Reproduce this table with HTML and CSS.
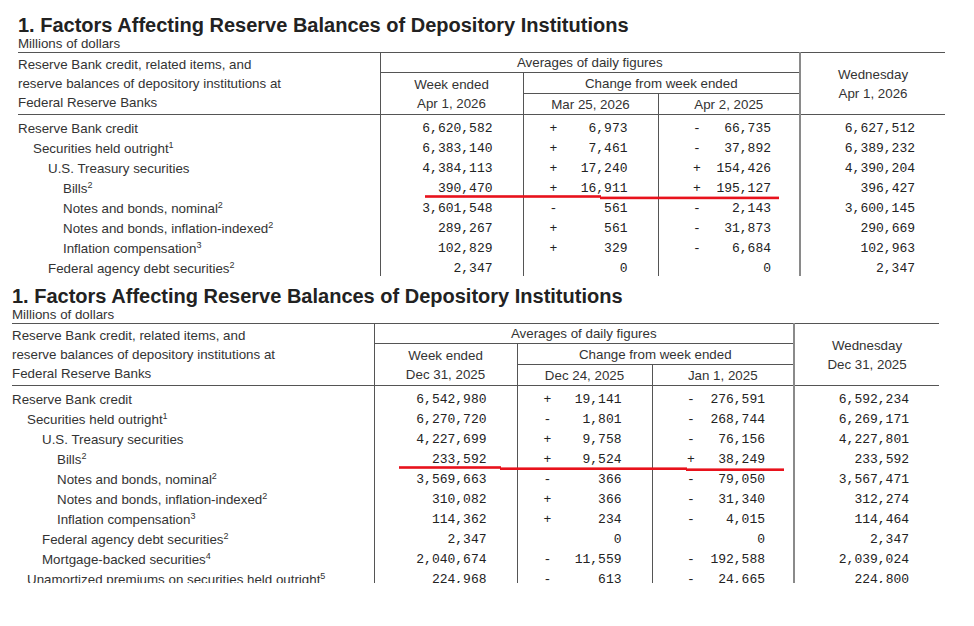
FILE: index.html
```html
<!DOCTYPE html>
<html lang="en">
<head>
<meta charset="utf-8">
<title>Factors Affecting Reserve Balances</title>
<link rel="stylesheet" href="styles.css">
</head>
<body>
<section class="panel panel-one">
  <h1 class="title">1. Factors Affecting Reserve Balances of Depository Institutions</h1>
  <div class="units">Millions of dollars</div>
  <table class="h41">
    <colgroup><col class="c-label"><col class="c-week"><col class="c-chg1"><col class="c-chg2"><col class="c-wed"></colgroup>
    <thead>
      <tr class="hr1">
        <th rowspan="3" class="h-label">Reserve Bank credit, related items, and<br>reserve balances of depository institutions at<br>Federal Reserve Banks</th>
        <th colspan="3" class="h-avg">Averages of daily figures</th>
        <th rowspan="3" class="h-wed">Wednesday<br>Apr 1, 2026</th>
      </tr>
      <tr class="hr2">
        <th rowspan="2" class="h-week">Week ended<br>Apr 1, 2026</th>
        <th colspan="2" class="h-chg">Change from week ended</th>
      </tr>
      <tr class="hr3">
        <th class="h-d1">Mar 25, 2026</th>
        <th class="h-d2">Apr 2, 2025</th>
      </tr>
    </thead>
    <tbody>
      <tr class="first"><td class="lab l0">Reserve Bank credit</td><td class="num n-week">6,620,582</td><td class="num n-c1">+    6,973</td><td class="num n-c2">-   66,735</td><td class="num n-wed">6,627,512</td></tr>
      <tr><td class="lab l1">Securities held outright<sup>1</sup></td><td class="num n-week">6,383,140</td><td class="num n-c1">+    7,461</td><td class="num n-c2">-   37,892</td><td class="num n-wed">6,389,232</td></tr>
      <tr><td class="lab l2">U.S. Treasury securities</td><td class="num n-week">4,384,113</td><td class="num n-c1">+   17,240</td><td class="num n-c2">+  154,426</td><td class="num n-wed">4,390,204</td></tr>
      <tr><td class="lab l3">Bills<sup>2</sup></td><td class="num n-week">390,470</td><td class="num n-c1">+   16,911</td><td class="num n-c2">+  195,127</td><td class="num n-wed">396,427</td></tr>
      <tr><td class="lab l3">Notes and bonds, nominal<sup>2</sup></td><td class="num n-week">3,601,548</td><td class="num n-c1">-      561</td><td class="num n-c2">-    2,143</td><td class="num n-wed">3,600,145</td></tr>
      <tr><td class="lab l3">Notes and bonds, inflation-indexed<sup>2</sup></td><td class="num n-week">289,267</td><td class="num n-c1">+      561</td><td class="num n-c2">-   31,873</td><td class="num n-wed">290,669</td></tr>
      <tr><td class="lab l3">Inflation compensation<sup>3</sup></td><td class="num n-week">102,829</td><td class="num n-c1">+      329</td><td class="num n-c2">-    6,684</td><td class="num n-wed">102,963</td></tr>
      <tr><td class="lab l2">Federal agency debt securities<sup>2</sup></td><td class="num n-week">2,347</td><td class="num n-c1">0</td><td class="num n-c2">0</td><td class="num n-wed">2,347</td></tr>
    </tbody>
  </table>
</section>

<section class="panel panel-two">
  <h1 class="title">1. Factors Affecting Reserve Balances of Depository Institutions</h1>
  <div class="units">Millions of dollars</div>
  <table class="h41">
    <colgroup><col class="c-label"><col class="c-week"><col class="c-chg1"><col class="c-chg2"><col class="c-wed"></colgroup>
    <thead>
      <tr class="hr1">
        <th rowspan="3" class="h-label">Reserve Bank credit, related items, and<br>reserve balances of depository institutions at<br>Federal Reserve Banks</th>
        <th colspan="3" class="h-avg">Averages of daily figures</th>
        <th rowspan="3" class="h-wed">Wednesday<br>Dec 31, 2025</th>
      </tr>
      <tr class="hr2">
        <th rowspan="2" class="h-week">Week ended<br>Dec 31, 2025</th>
        <th colspan="2" class="h-chg">Change from week ended</th>
      </tr>
      <tr class="hr3">
        <th class="h-d1">Dec 24, 2025</th>
        <th class="h-d2">Jan 1, 2025</th>
      </tr>
    </thead>
    <tbody>
      <tr class="first"><td class="lab l0">Reserve Bank credit</td><td class="num n-week">6,542,980</td><td class="num n-c1">+   19,141</td><td class="num n-c2">-  276,591</td><td class="num n-wed">6,592,234</td></tr>
      <tr><td class="lab l1">Securities held outright<sup>1</sup></td><td class="num n-week">6,270,720</td><td class="num n-c1">-    1,801</td><td class="num n-c2">-  268,744</td><td class="num n-wed">6,269,171</td></tr>
      <tr><td class="lab l2">U.S. Treasury securities</td><td class="num n-week">4,227,699</td><td class="num n-c1">+    9,758</td><td class="num n-c2">-   76,156</td><td class="num n-wed">4,227,801</td></tr>
      <tr><td class="lab l3">Bills<sup>2</sup></td><td class="num n-week">233,592</td><td class="num n-c1">+    9,524</td><td class="num n-c2">+   38,249</td><td class="num n-wed">233,592</td></tr>
      <tr><td class="lab l3">Notes and bonds, nominal<sup>2</sup></td><td class="num n-week">3,569,663</td><td class="num n-c1">-      366</td><td class="num n-c2">-   79,050</td><td class="num n-wed">3,567,471</td></tr>
      <tr><td class="lab l3">Notes and bonds, inflation-indexed<sup>2</sup></td><td class="num n-week">310,082</td><td class="num n-c1">+      366</td><td class="num n-c2">-   31,340</td><td class="num n-wed">312,274</td></tr>
      <tr><td class="lab l3">Inflation compensation<sup>3</sup></td><td class="num n-week">114,362</td><td class="num n-c1">+      234</td><td class="num n-c2">-    4,015</td><td class="num n-wed">114,464</td></tr>
      <tr><td class="lab l2">Federal agency debt securities<sup>2</sup></td><td class="num n-week">2,347</td><td class="num n-c1">0</td><td class="num n-c2">0</td><td class="num n-wed">2,347</td></tr>
      <tr><td class="lab l2">Mortgage-backed securities<sup>4</sup></td><td class="num n-week">2,040,674</td><td class="num n-c1">-   11,559</td><td class="num n-c2">-  192,588</td><td class="num n-wed">2,039,024</td></tr>
      <tr><td class="lab l1">Unamortized premiums on securities held outright<sup>5</sup></td><td class="num n-week">224,968</td><td class="num n-c1">-      613</td><td class="num n-c2">-   24,665</td><td class="num n-wed">224,800</td></tr>
    </tbody>
  </table>
</section>

<svg class="marks" width="974" height="626" viewBox="0 0 974 626" aria-hidden="true">
  <rect x="425" y="195.2" width="176" height="2.6" fill="#e8121c"/>
  <rect x="600" y="196.6" width="179" height="2.6" fill="#e8121c"/>
  <rect x="399" y="466.2" width="102" height="2.6" fill="#e8121c"/>
  <rect x="500" y="467.4" width="187" height="2.6" fill="#e8121c"/>
  <rect x="686" y="468.4" width="98" height="2.6" fill="#e8121c"/>
</svg>
</body>
</html>
```

FILE: styles.css
```css
html, body {
  margin: 0;
  padding: 0;
  background: #ffffff;
}
body {
  position: relative;
  width: 974px;
  height: 626px;
  overflow: hidden;
  font-family: "Liberation Sans", Arial, sans-serif;
  color: #333333;
}
.panel {
  overflow: hidden;
}
.panel-one {
  height: 276px;
  padding: 14px 0 0 18px;
  box-sizing: border-box;
}
.panel-two {
  height: 307px;
  padding: 9px 0 0 12px;
  box-sizing: border-box;
}
.title {
  margin: 0;
  font-size: 20px;
  line-height: 22px;
  font-weight: bold;
  color: #222222;
}
.units {
  font-size: 13.33px;
  line-height: 16px;
  color: #333333;
}
.h41 {
  border-collapse: collapse;
  table-layout: fixed;
  width: 927px;
  border-top: 1px solid #555555;
}
.c-label { width: 362px; }
.c-week { width: 143px; }
.c-chg1 { width: 135px; }
.c-chg2 { width: 142px; }
.c-wed { width: 145px; }

.h41 th {
  font-weight: normal;
  font-size: 13.33px;
  line-height: 19px;
  padding: 0;
  text-align: center;
  vertical-align: middle;
  color: #333333;
}
.hr1 { height: 20px; }
.hr2 { height: 21px; }
.hr3 { height: 21px; }
.h41 thead tr:last-child th,
.h41 th.h-label,
.h41 th.h-week,
.h41 th.h-wed {
  border-bottom: 1px solid #555555;
}
.h41 th.h-label {
  text-align: left;
  border-right: 1px solid #555555;
}
.h41 th.h-avg {
  border-bottom: 1px solid #555555;
}
.h41 th.h-chg {
  border-bottom: 1px solid #555555;
}
.h41 th.h-week {
  border-right: 1px solid #555555;
}
.h41 th.h-d1 {
  border-right: 1px solid #555555;
}
.h41 th.h-wed,
.h41 td.n-wed {
  border-left: 2px solid #8a8a8a;
}

.h41 td {
  padding: 0;
  height: 20px;
  line-height: 20px;
  white-space: pre;
  vertical-align: middle;
}
.h41 tr.first td {
  padding-top: 4px;
}
.lab {
  font-size: 13.33px;
  border-right: 1px solid #555555;
}
.l0 { padding-left: 0; }
.h41 td.l1 { padding-left: 15px; }
.h41 td.l2 { padding-left: 30px; }
.h41 td.l3 { padding-left: 45px; }
.lab sup {
  font-size: 9px;
  line-height: 0;
  vertical-align: 5px;
}
.num {
  font-family: "Liberation Mono", "Courier New", monospace;
  font-size: 13px;
  text-align: right;
  color: #222222;
}
.h41 td.n-week { padding-right: 30px; border-right: 1px solid #555555; }
.h41 td.n-c1 { padding-right: 30px; border-right: 1px solid #555555; }
.h41 td.n-c2 { padding-right: 28px; }
.h41 td.n-wed { padding-right: 30px; }

.marks {
  position: absolute;
  left: 0;
  top: 0;
  pointer-events: none;
}
```
